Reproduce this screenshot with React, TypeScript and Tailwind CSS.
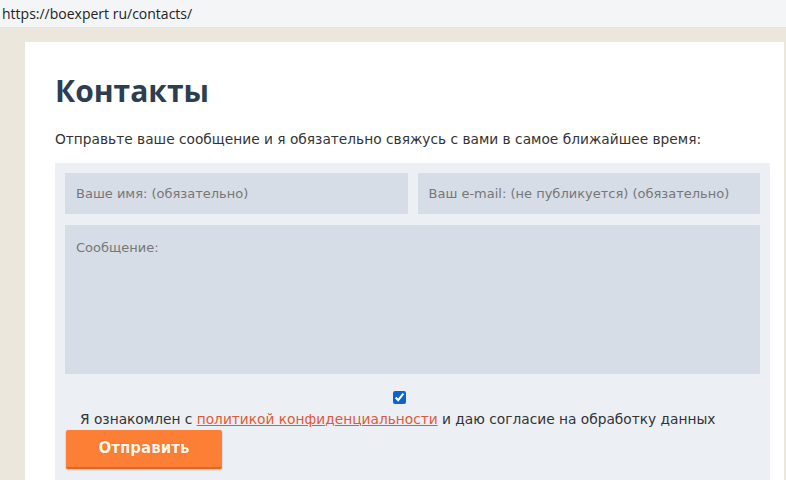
export default function App() {
  return (
    <div className="w-[786px] h-[480px] overflow-hidden bg-[#ece7dc] flex flex-col" style={{ fontFamily: '"DejaVu Sans", Verdana, sans-serif' }}>
      <div className="h-[28px] shrink-0 bg-[#f3f5f7] border-b border-[#e2e4e6] flex items-center pl-[2px] text-[14px] text-[#222]" style={{ fontFamily: '"Open Sans", "Noto Sans", sans-serif' }}>
        https://boexpert ru/contacts/
      </div>
      <div className="flex-1 pt-[14px] pl-[25px] pr-[2px]">
        <div className="bg-white h-full pl-[30px] pr-[14px] pt-[29px]">
          <h1 className="text-[30px] font-bold text-[#2c3e50] leading-[40px]" style={{ fontFamily: '"Open Sans", "Noto Sans", sans-serif' }}>Контакты</h1>
          <p className="mt-[18px] text-[13.75px] text-[#333] leading-[20px]">
            Отправьте ваше сообщение и я обязательно свяжусь с вами в самое ближайшее время:
          </p>
          <div className="mt-[14px] bg-[#eceff3] p-[10px] pb-[14px] h-[330px]">
            <div className="flex gap-[10px]">
              <div className="flex-1 h-[41px] bg-[#d6dde6] flex items-center px-[11px] text-[13px] text-[#777]">Ваше имя: (обязательно)</div>
              <div className="flex-1 h-[41px] bg-[#d6dde6] flex items-center px-[11px] text-[13px] text-[#777]">Ваш e-mail: (не публикуется) (обязательно)</div>
            </div>
            <div className="mt-[11px] h-[149px] bg-[#d6dde6] px-[11px] pt-[13px] text-[13px] text-[#777]">Сообщение:</div>
            <div className="flex justify-center mt-[17px] pr-[26px]">
              <input type="checkbox" defaultChecked className="w-[13px] h-[13px] accent-[#0b63ce] m-0" />
            </div>
            <div className="pl-[15px] mt-[5px] text-[13.75px] text-[#333] leading-[20px]">
              Я ознакомлен с <span className="text-[#e05a3a] underline">политикой конфиденциальности</span> и даю согласие на обработку данных
            </div>
            <button className="mt-[1px] ml-[1px] w-[156px] h-[39px] bg-[#fd7f35] rounded-[2px] border-b-[2px] border-[#d66a2e] shadow-[0_1px_2px_rgba(0,0,0,0.25)] text-[#fff6ea] font-bold text-[15px] [text-shadow:0_0_1px_rgba(150,60,10,0.6)]" style={{ fontFamily: '"DejaVu Sans", Verdana, sans-serif' }}>
              Отправить
            </button>
          </div>
        </div>
      </div>
    </div>
  );
}
